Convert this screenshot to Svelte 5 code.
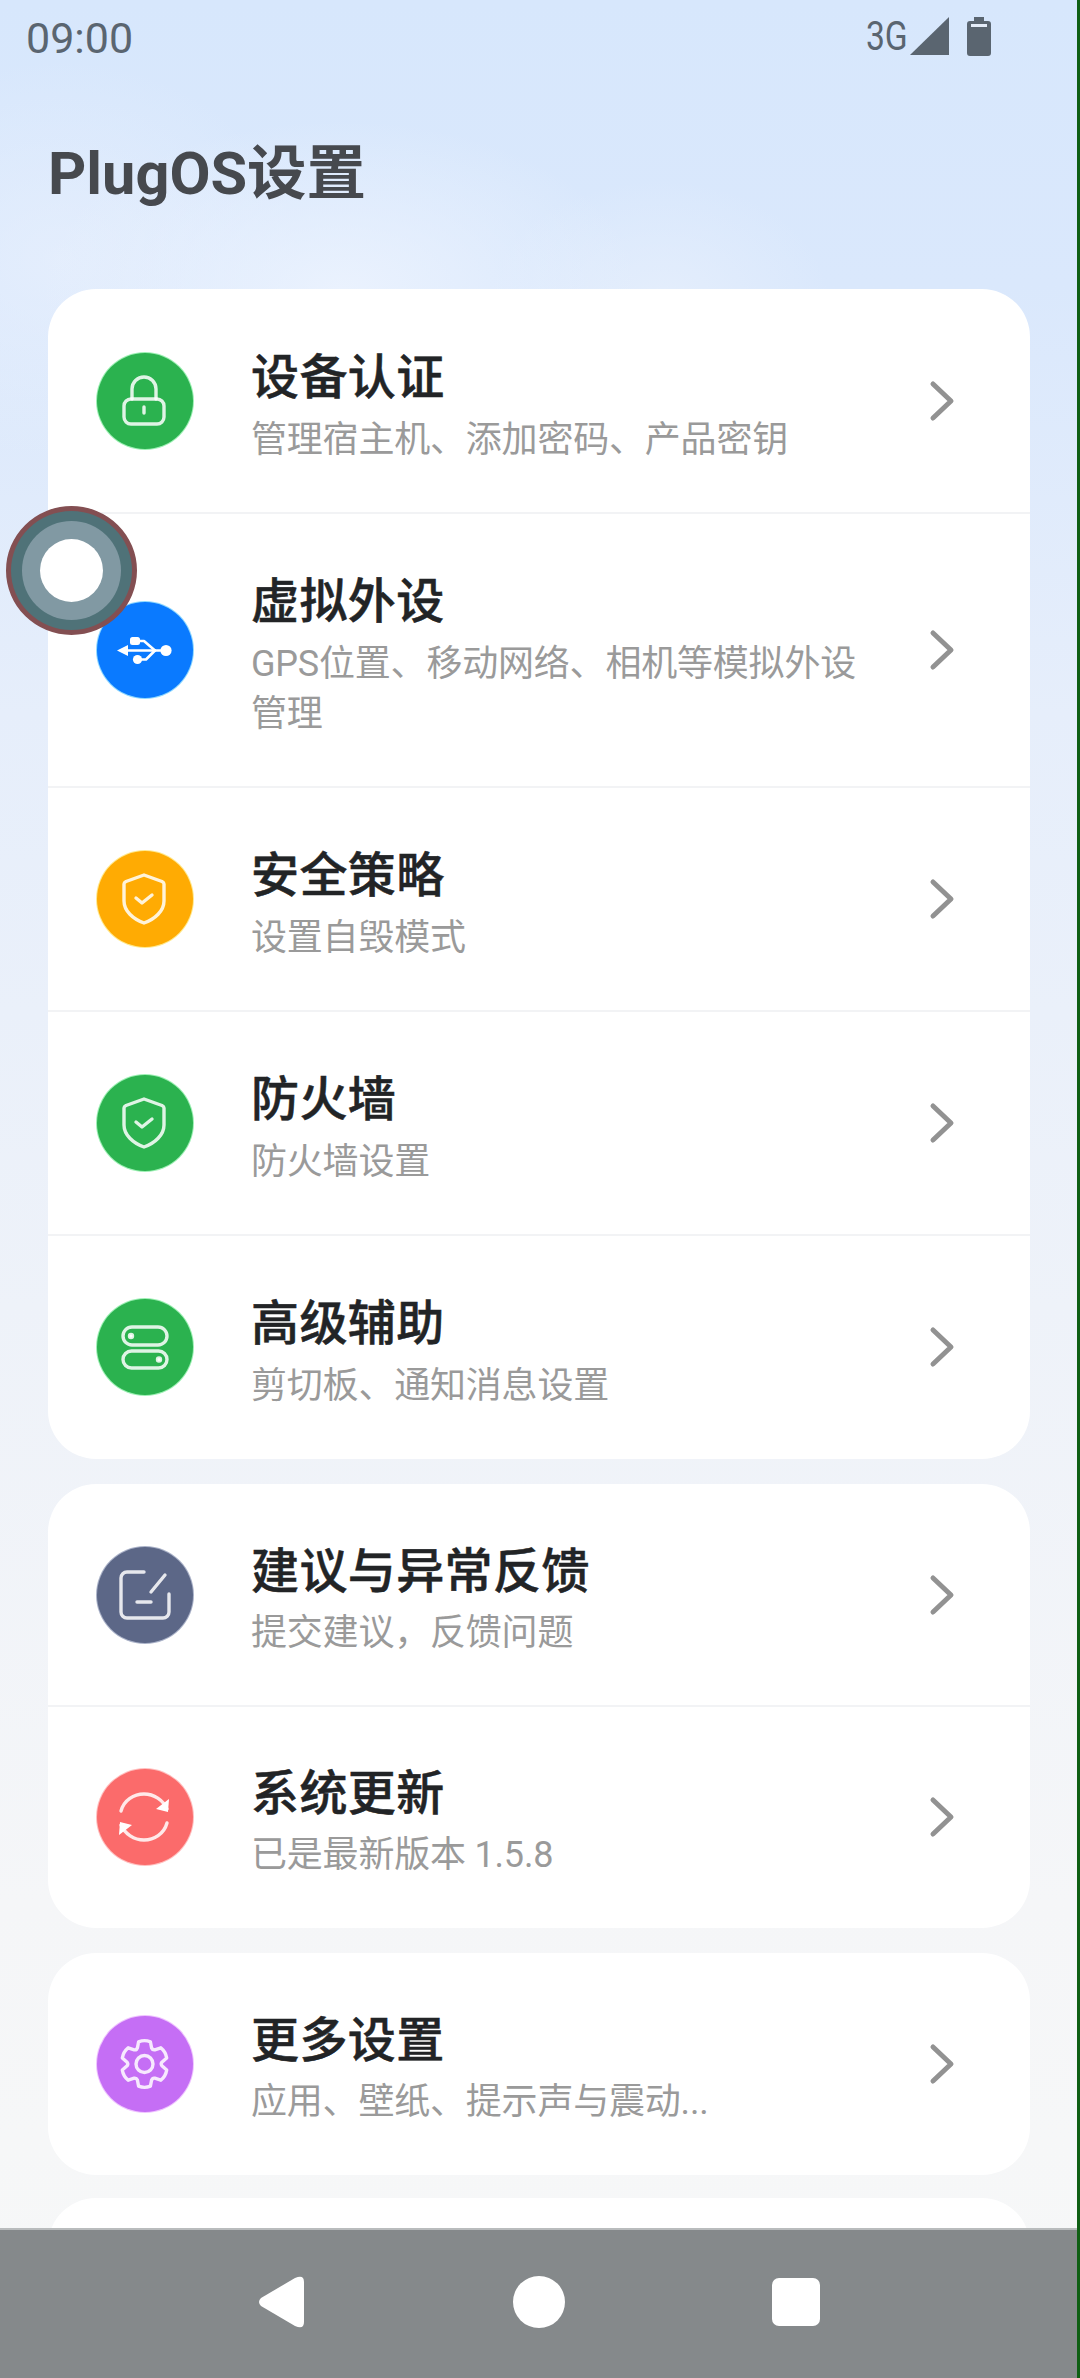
<script>
  const groups = [
    {
      tight: false,
      items: [
        { icon: "lock", color: "#2bb24f", halo: "#9df0b4", title: "设备认证", sub: "管理宿主机、添加密码、产品密钥" },
        { icon: "usb", color: "#0a7aff", halo: "#8fd8ff", title: "虚拟外设", sub: "GPS位置、移动网络、相机等模拟外设管理" },
        { icon: "shield", color: "#ffab03", halo: "#ffe98f", title: "安全策略", sub: "设置自毁模式" },
        { icon: "shield", color: "#2bb24f", halo: "#9df0b4", title: "防火墙", sub: "防火墙设置" },
        { icon: "toggles", color: "#2bb24f", halo: "#9df0b4", title: "高级辅助", sub: "剪切板、通知消息设置" },
      ],
    },
    {
      tight: true,
      items: [
        { icon: "edit", color: "#5c6787", halo: "#aab2c8", title: "建议与异常反馈", sub: "提交建议\uFF0C反馈问题" },
        { icon: "sync", color: "#fb6b6b", halo: "#ffc0c0", title: "系统更新", sub: "已是最新版本 1.5.8" },
      ],
    },
    {
      tight: true,
      items: [{ icon: "gear", color: "#c56ef5", halo: "#efc4ff", title: "更多设置", sub: "应用、壁纸、提示声与震动..." }],
    },
  ];

  // six rounded teeth around the centre of the badge
  function gearPath(cx, cy, outer, inner) {
    let d = "";
    for (let i = 0; i < 6; i++) {
      const a = ((-90 + i * 60) * Math.PI) / 180;
      const at = (r, da) => `${(cx + r * Math.cos(a + da)).toFixed(1)} ${(cy + r * Math.sin(a + da)).toFixed(1)}`;
      d += `${i ? "L" : "M"}${at(inner, -0.42)} L${at(outer, -0.26)} Q${at(outer + 1.5, 0)} ${at(outer, 0.26)} L${at(inner, 0.42)} Q${at(inner - 1.5, 0.52)} `;
      d += at(inner, 0.62) + " ";
    }
    return d + "Z";
  }
</script>

<div class="screen">
  <div class="content">
    <div class="status">
      <span class="time">09:00</span>
      <div class="status-right">
        <span class="net">3G</span>
        <svg class="signal" width="40" height="38" viewBox="0 0 40 38"><path d="M39 0V38H0Z" fill="#5a6570" /></svg>
        <svg class="battery" width="24" height="39" viewBox="0 0 24 39">
          <path d="M7 0h10v4h4a3 3 0 0 1 3 3v29a3 3 0 0 1-3 3H3a3 3 0 0 1-3-3V7a3 3 0 0 1 3-3h4Z" fill="#5a6570" />
          <rect x="4" y="7" width="16" height="3" fill="#e4ecf8" />
        </svg>
      </div>
    </div>

    <h1 class="heading">PlugOS设置</h1>

    <div class="groups">
      {#each groups as group}
        <section class="card" class:tight={group.tight}>
          {#each group.items as item}
            <div class="row">
              <div class="badge" style="background: {item.color}; box-shadow: 0 0 0 1px {item.halo};">
                <svg width="96" height="96" viewBox="0 0 96 96" fill="none" stroke="#fff" stroke-opacity="0.85" stroke-width="3.4" stroke-linecap="round" stroke-linejoin="round">
                  {#if item.icon === "lock"}
                    <rect x="27" y="46" width="40" height="25" rx="7" />
                    <path d="M35 46V36a12 12 0 0 1 24 0V46" />
                    <path d="M47 54V60" />
                  {:else if item.icon === "usb"}
                    <g stroke-opacity="1" stroke-width="2.6">
                      <path d="M20 48.5L31 43V54Z" fill="#fff" stroke="none" />
                      <path d="M28 48.5H68" />
                      <path d="M40 39H47L58 48.5" />
                      <path d="M43 57.5H49L58 48.5" />
                      <rect x="33" y="35" width="10" height="8" rx="2.5" fill="#fff" stroke="none" />
                      <circle cx="40.5" cy="57.5" r="4.6" fill="#fff" stroke="none" />
                      <circle cx="69" cy="48.5" r="5.6" fill="#fff" stroke="none" />
                    </g>
                  {:else if item.icon === "shield"}
                    <path d="M47 24L65 30.5Q67 31.5 67 33V50C67 60 58 68 47 72C36 68 27 60 27 50V33Q27 31.5 29 30.5Z" />
                    <path d="M39 47L45 52L55 44" />
                  {:else if item.icon === "toggles"}
                    <rect x="26" y="28" width="44" height="18" rx="9" />
                    <rect x="26" y="52" width="44" height="17" rx="8.5" />
                    <circle cx="34" cy="37" r="1.5" fill="#fff" />
                    <circle cx="62" cy="60.5" r="1.5" fill="#fff" />
                  {:else if item.icon === "edit"}
                    <path d="M47 25H30a6 6 0 0 0-6 6V65a6 6 0 0 0 6 6H66a6 6 0 0 0 6-6V47" />
                    <path d="M68 28L54 45" />
                    <path d="M40 55H54" />
                  {:else if item.icon === "sync"}
                    <path d="M24 42C27 31 37 25 47 25C57 25 66 31 70 40" />
                    <path d="M72 29L71 42L59 39" fill="#fff" stroke="none" transform="translate(0 1)" />
                    <path d="M70 54C67 65 57 71 47 71C37 71 28 65 24 56" />
                    <path d="M22 67L23 54L35 57" fill="#fff" stroke="none" transform="translate(0 -1)" />
                  {:else if item.icon === "gear"}
                    <path d={gearPath(47.5, 48, 23, 17.5)} />
                    <circle cx="47.5" cy="48" r="8.5" />
                  {/if}
                </svg>
              </div>
              <div class="text">
                <div class="title">{item.title}</div>
                <div class="sub">{item.sub}</div>
              </div>
              <svg class="chevron" width="30" height="42" viewBox="0 0 30 42" fill="none">
                <path d="M5 4L23 21L5 38" stroke="#929292" stroke-width="5" stroke-linecap="round" stroke-linejoin="round" />
              </svg>
            </div>
          {/each}
        </section>
      {/each}
      <section class="card stub"></section>
    </div>
  </div>

  <nav class="navbar">
    <svg class="nav-back" width="46" height="52" viewBox="0 0 46 52"><path d="M3 22L37 2Q46 -2 46 6V46Q46 54 37 50L3 30Q-1 26 3 22Z" fill="#fff" /></svg>
    <div class="nav-home"></div>
    <div class="nav-recent"></div>
  </nav>

  <div class="float-ball"><div class="float-inner"><div class="float-dot"></div></div></div>
  <div class="edge"></div>
</div>

<style>
  :global(body) {
    margin: 0;
  }

  .screen {
    position: relative;
    width: 1080px;
    height: 2378px;
    overflow: hidden;
    display: flex;
    flex-direction: column;
    font-family: Roboto, "Noto Sans CJK SC", sans-serif;
    background:
      radial-gradient(ellipse 300px 170px at 340px 290px, rgba(236, 243, 254, 0.9), transparent),
      radial-gradient(ellipse 170px 120px at 660px 300px, rgba(232, 240, 252, 0.7), transparent),
      radial-gradient(ellipse 240px 200px at 60px 260px, rgba(232, 240, 253, 0.7), transparent),
      linear-gradient(180deg, #d7e7fc 0%, #dae8fc 12%, #e6eefb 30%, #eef2f9 55%, #f5f6f8 80%, #f7f8f8 100%);
  }

  .content {
    flex: 1;
    min-height: 0;
    overflow: hidden;
  }

  .status {
    height: 76px;
    padding: 0 89px 0 26px;
    display: flex;
    justify-content: space-between;
    align-items: center;
    color: #5a6570;
  }

  .time {
    font-size: 43px;
    line-height: 76px;
  }

  .status-right {
    display: flex;
    align-items: center;
    margin-top: -4px;
  }

  .net {
    display: inline-block;
    font-size: 40px;
    margin-right: -2px;
    transform: scaleX(0.84);
  }

  .battery {
    margin-left: 17px;
  }

  .heading {
    margin: 58px 0 0 48px;
    font-size: 59.5px;
    line-height: 80px;
    font-weight: 700;
    color: #46494e;
  }

  .groups {
    margin: 75px 50px 0 48px;
    display: flex;
    flex-direction: column;
    gap: 25px;
  }

  .card {
    background: #fff;
    border-radius: 48px;
    overflow: hidden;
  }

  .stub {
    height: 200px;
    margin-top: -2px;
  }

  .row {
    display: flex;
    align-items: center;
    padding: 50px 0 50px 49px;
    position: relative;
  }

  .row + .row::before {
    content: "";
    position: absolute;
    top: -1px;
    left: 0;
    right: 0;
    height: 2px;
    background: #f2f3f5;
  }

  .badge {
    flex: none;
    width: 96px;
    height: 96px;
    border-radius: 50%;
  }

  .badge svg {
    display: block;
  }

  .text {
    flex: 1;
    margin-left: 58px;
    min-width: 0;
    transform: translateY(2px);
  }

  .title {
    font-size: 48px;
    line-height: 74px;
    font-weight: 500;
    letter-spacing: 0.4px;
    -webkit-text-stroke: 0.5px #222426;
    color: #222426;
  }

  .tight .title {
    line-height: 72px;
  }

  .sub {
    font-size: 36px;
    line-height: 50px;
    letter-spacing: -0.2px;
    color: #9a9a9a;
  }

  .chevron {
    flex: none;
    margin: 0 72px 0 64px;
  }

  .navbar {
    flex: none;
    height: 150px;
    box-sizing: border-box;
    border-top: 2px solid #b9bcbd;
    background: #85898b;
    display: flex;
    align-items: center;
    justify-content: center;
    gap: 207px;
    padding: 0 2px 4px 0;
  }

  .nav-back {
    margin-right: 2px;
  }

  .nav-home {
    width: 52px;
    height: 52px;
    border-radius: 50%;
    background: #fff;
  }

  .nav-recent {
    width: 48px;
    height: 48px;
    border-radius: 7px;
    background: #fff;
  }

  .float-ball {
    position: absolute;
    left: 6px;
    top: 506px;
    width: 131px;
    height: 129px;
    box-sizing: border-box;
    border-radius: 50%;
    background: #4f7278;
    border: 5px solid #834f52;
    display: flex;
    align-items: center;
    justify-content: center;
  }

  .float-inner {
    width: 99px;
    height: 99px;
    border-radius: 50%;
    background: #8199a3;
    display: flex;
    align-items: center;
    justify-content: center;
  }

  .float-dot {
    width: 63px;
    height: 63px;
    border-radius: 50%;
    background: #fff;
  }

  .edge {
    position: absolute;
    top: 0;
    right: 0;
    bottom: 0;
    width: 3px;
    background: #0f5f14;
  }
</style>
